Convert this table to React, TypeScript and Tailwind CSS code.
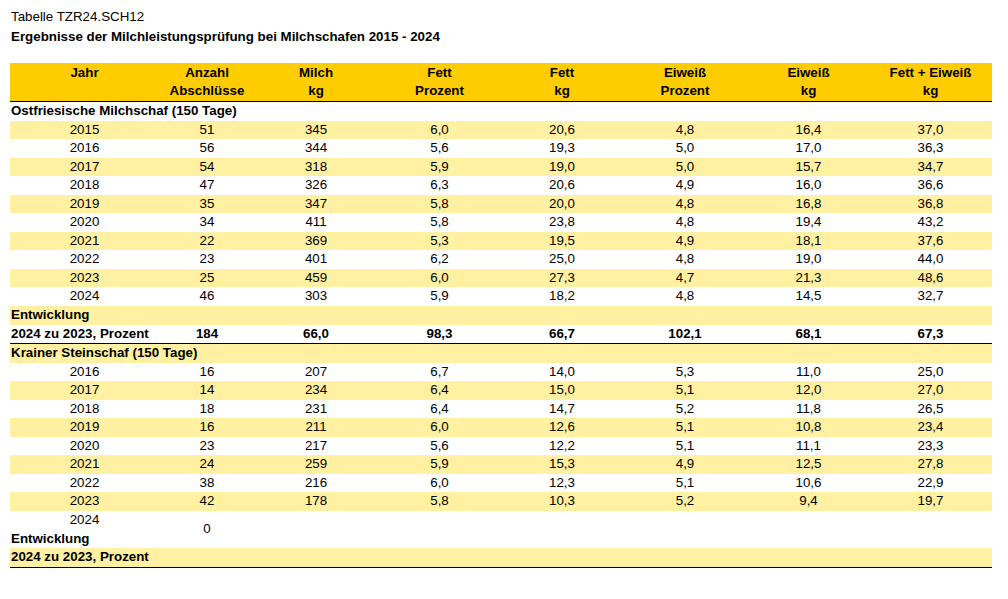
type Row = [string, string, string, string, string, string, string, string];

const cols = 'grid grid-cols-[149px_96px_122px_125px_120px_126px_121px_123px]';

const ostfriesisch: Row[] = [
    ['2015', '51', '345', '6,0', '20,6', '4,8', '16,4', '37,0'],
    ['2016', '56', '344', '5,6', '19,3', '5,0', '17,0', '36,3'],
    ['2017', '54', '318', '5,9', '19,0', '5,0', '15,7', '34,7'],
    ['2018', '47', '326', '6,3', '20,6', '4,9', '16,0', '36,6'],
    ['2019', '35', '347', '5,8', '20,0', '4,8', '16,8', '36,8'],
    ['2020', '34', '411', '5,8', '23,8', '4,8', '19,4', '43,2'],
    ['2021', '22', '369', '5,3', '19,5', '4,9', '18,1', '37,6'],
    ['2022', '23', '401', '6,2', '25,0', '4,8', '19,0', '44,0'],
    ['2023', '25', '459', '6,0', '27,3', '4,7', '21,3', '48,6'],
    ['2024', '46', '303', '5,9', '18,2', '4,8', '14,5', '32,7'],
];

const krainer: Row[] = [
    ['2016', '16', '207', '6,7', '14,0', '5,3', '11,0', '25,0'],
    ['2017', '14', '234', '6,4', '15,0', '5,1', '12,0', '27,0'],
    ['2018', '18', '231', '6,4', '14,7', '5,2', '11,8', '26,5'],
    ['2019', '16', '211', '6,0', '12,6', '5,1', '10,8', '23,4'],
    ['2020', '23', '217', '5,6', '12,2', '5,1', '11,1', '23,3'],
    ['2021', '24', '259', '5,9', '15,3', '4,9', '12,5', '27,8'],
    ['2022', '38', '216', '6,0', '12,3', '5,1', '10,6', '22,9'],
    ['2023', '42', '178', '5,8', '10,3', '5,2', '9,4', '19,7'],
];

const headers = [
    ['Jahr', ''],
    ['Anzahl', 'Abschlüsse'],
    ['Milch', 'kg'],
    ['Fett', 'Prozent'],
    ['Fett', 'kg'],
    ['Eiweiß', 'Prozent'],
    ['Eiweiß', 'kg'],
    ['Fett + Eiweiß', 'kg'],
];

function DataRow({ row, striped, bold }: { row: Row; striped: boolean; bold?: boolean }) {
    return (
        <div className={`${cols} h-[18.55px] leading-[18.55px] ${striped ? 'bg-[#fff1a1]' : ''} ${bold ? 'font-bold' : ''}`}>
            {row.map((cell, i) => (
                <div key={i} className="text-center">{cell}</div>
            ))}
        </div>
    );
}

function LabelRow({ label, striped, values, line }: { label: string; striped: boolean; values?: string[]; line?: boolean }) {
    return (
        <div className={`${cols} h-[18.55px] leading-[18.55px] font-bold ${striped ? 'bg-[#fff1a1]' : ''} ${line ? 'border-b border-black box-content' : ''}`}>
            <div className="pl-[1px] whitespace-nowrap">{label}</div>
            {values?.map((v, i) => (
                <div key={i} className="text-center">{v}</div>
            ))}
        </div>
    );
}

export default function App() {
    return (
        <div className="bg-white text-black text-[13.33px] pt-[7px] pl-[10px]" style={{ fontFamily: '"Liberation Sans", Arial, sans-serif' }}>
            <div className="pl-[1px] leading-[20px]">Tabelle TZR24.SCH12</div>
            <div className="pl-[1px] leading-[20px] font-bold">
                Ergebnisse der Milchleistungsprüfung bei Milchschafen 2015 - 2024
            </div>

            <div className="w-[982px] mt-[16px]">
                <div className={`${cols} bg-[#ffcc00] h-[37px] border-b border-black box-content font-bold leading-[18px] pt-[1px]`}>
                    {headers.map(([a, b], i) => (
                        <div key={i} className="text-center">
                            <div>{a}</div>
                            <div>{b}</div>
                        </div>
                    ))}
                </div>

                <LabelRow label="Ostfriesische Milchschaf (150 Tage)" striped={false} />
                {ostfriesisch.map((row, i) => (
                    <DataRow key={row[0]} row={row} striped={i % 2 === 0} />
                ))}
                <LabelRow label="Entwicklung" striped />
                <LabelRow
                    label="2024 zu 2023, Prozent"
                    striped={false}
                    values={['184', '66,0', '98,3', '66,7', '102,1', '68,1', '67,3']}
                    line
                />

                <LabelRow label="Krainer Steinschaf (150 Tage)" striped />
                {krainer.map((row, i) => (
                    <DataRow key={row[0]} row={row} striped={i % 2 === 1} />
                ))}
                <div className={`${cols} grid-rows-[18.55px_18.55px] leading-[18.55px]`}>
                    <div className="text-center">2024</div>
                    <div className="row-span-2 flex items-center justify-center">0</div>
                    <div className="col-start-1 pl-[1px] font-bold">Entwicklung</div>
                </div>
                <LabelRow label="2024 zu 2023, Prozent" striped line />
            </div>
        </div>
    );
}
